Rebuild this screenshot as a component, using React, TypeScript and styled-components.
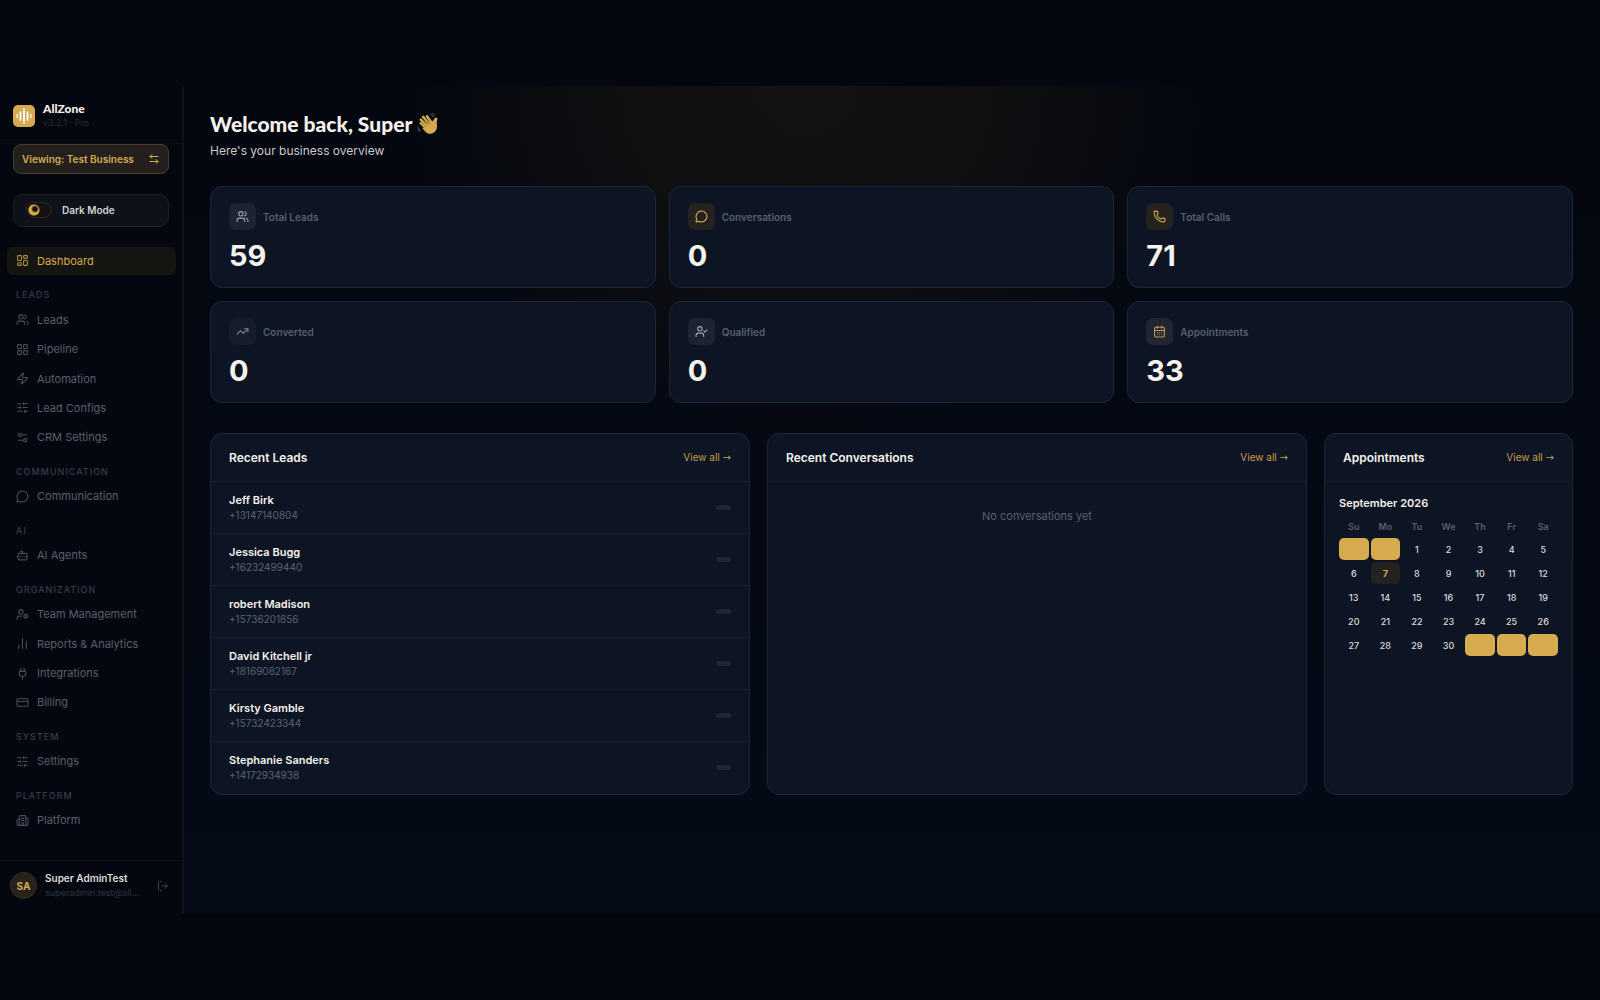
import React from "react";
import styled, { createGlobalStyle, css } from "styled-components";
import {
  ArrowLeftRight,
  Bot,
  Building2,
  CalendarDays,
  ChartNoAxesColumn,
  CreditCard,
  LayoutDashboard,
  LayoutGrid,
  LogOut,
  MessageCircle,
  Phone,
  Plug,
  Settings2,
  SlidersHorizontal,
  TrendingUp,
  UserCheck,
  UserCog,
  Users,
  Zap,
} from "lucide-react";

const gold = "#d6ab4f";
const cream = "#f5f2ec";
const muted = "#56606b";
const panel = "#0d1423";
const line = "#1e2636";

const GlobalStyle = createGlobalStyle`
  * { box-sizing: border-box; }
  body {
    margin: 0;
    background: #04070f;
    color: ${cream};
    font-family: Inter, "Liberation Sans", sans-serif;
    -webkit-font-smoothing: antialiased;
  }
  button { font: inherit; color: inherit; border: 0; background: none; padding: 0; cursor: pointer; }
  a { color: inherit; text-decoration: none; }
  h1, h2, h3, p, ul { margin: 0; padding: 0; }
  ul { list-style: none; }
`;

const Page = styled.div`
  min-height: 100vh;
  padding: 86px 0 87px;
  display: flex;
`;

const Sidebar = styled.aside`
  width: 184px;
  flex: none;
  display: flex;
  flex-direction: column;
  border-right: 2px solid #101216;
`;

const Brand = styled.div`
  display: flex;
  align-items: center;
  gap: 8px;
  height: 58px;
  padding: 2px 13px 0;
  border-bottom: 1px solid #0b0e14;
`;

const BrandName = styled.div`
  font: 900 12px/14px Lato, sans-serif;
`;

const Version = styled.div`
  font-size: 9px;
  line-height: 14px;
  color: #262e3e;
`;

const Viewing = styled.button`
  height: 30px;
  margin: 0 13px;
  padding: 0 8px;
  display: flex;
  align-items: center;
  justify-content: space-between;
  border: 1px solid #4a3f28;
  border-radius: 8px;
  background: #231f1c;
  color: ${gold};
  font-size: 10px;
  font-weight: 600;
`;

const ModeSwitch = styled.label`
  height: 33px;
  margin: 20px 13px 19px;
  padding: 0 12px 2px;
  display: flex;
  align-items: center;
  gap: 10px;
  border: 1px solid #20201f;
  border-radius: 10px;
  background: #0e1118;
  color: #d3d3d3;
  font-size: 10px;
  font-weight: 600;
  cursor: pointer;
`;

const ModeInput = styled.input`
  appearance: none;
  width: 26px;
  height: 16px;
  margin: 0;
  border: 1px solid #2c2820;
  border-radius: 8px;
  background:
    radial-gradient(circle at 8px 6px, #15130f 2px, transparent 4px),
    radial-gradient(circle at 7px 7px, ${gold} 5px, transparent 6px),
    #15130f;
`;

const Nav = styled.nav`
  flex: 1;
  padding: 0 6px 25px 7px;
  display: grid;
  grid-auto-rows: 1fr;
  align-items: center;
`;

const NavLink = styled.a<{ $active?: boolean }>`
  height: 28px;
  padding: 0 9px;
  display: flex;
  align-items: center;
  gap: 8px;
  border-radius: 6px;
  font-size: 11px;
  color: #56616d;
  ${(p) =>
    p.$active &&
    css`
      background: #141411;
      color: ${gold};
    `}
  svg { flex: none; opacity: 0.8; }
`;

const NavLabel = styled.h3`
  padding: 10px 9px 0;
  font-size: 9px;
  line-height: 12px;
  font-weight: 500;
  letter-spacing: 1px;
  color: #353d4b;
`;

const Account = styled.div`
  height: 53px;
  padding: 0 13px 3px 10px;
  display: flex;
  align-items: center;
  gap: 8px;
  border-top: 1px solid #0b0f16;
`;

const Avatar = styled.div`
  width: 27px;
  height: 27px;
  flex: none;
  display: grid;
  place-items: center;
  border: 1px solid #39301f;
  border-radius: 50%;
  background: #25221e;
  color: ${gold};
  font-size: 10px;
  font-weight: 700;
`;

const AccountText = styled.div`
  flex: 1;
  min-width: 0;
`;

const AccountName = styled.div`
  font-size: 10px;
  line-height: 15px;
  font-weight: 600;
  color: #dedddb;
  white-space: nowrap;
`;

const AccountMail = styled.div`
  font-size: 9px;
  line-height: 14px;
  color: #2b3444;
  white-space: nowrap;
`;

const LogoutButton = styled.button`
  display: flex;
  margin-left: 4px;
  color: #3b4350;
`;

const Main = styled.main`
  flex: 1;
  min-width: 0;
  padding: 24px 27px 0 26px;
  background:
    radial-gradient(ellipse 400px 360px at 44% 0, rgba(25, 23, 19, 0.7) 0, rgba(25, 23, 19, 0.55) 45%, transparent 100%),
    linear-gradient(#04070f 0, #040914 60%, #040b16 100%);
`;

const Title = styled.h1`
  display: flex;
  align-items: center;
  gap: 5px;
  font: 900 21px/28px Lato, sans-serif;
`;

const Subtitle = styled.p`
  margin-top: 4px;
  font-size: 12px;
  line-height: 18px;
  color: #c9c9ca;
`;

const StatGrid = styled.section`
  margin-top: 26px;
  display: grid;
  grid-template-columns: repeat(3, 1fr);
  gap: 13px;
`;

const Card = styled.article`
  border: 1px solid ${line};
  border-radius: 12px;
  background: ${panel};
`;

const StatCard = styled(Card)`
  padding: 16px 18px 15px;
`;

const StatHead = styled.div`
  display: flex;
  align-items: center;
  gap: 7px;
  color: ${muted};
  font-size: 10px;
  line-height: 14px;
  font-weight: 600;
`;

const tones = {
  grey: ["#1c2333", "#a3a4a6"],
  gold: ["#25221f", gold],
  dim: ["#151c2a", "#84868a"],
  mixed: ["#212531", "#c09a55"],
};

const StatIcon = styled.span<{ $tone: keyof typeof tones }>`
  width: 27px;
  height: 27px;
  display: grid;
  place-items: center;
  border-radius: 7px;
  background: ${(p) => tones[p.$tone][0]};
  color: ${(p) => tones[p.$tone][1]};
`;

const StatValue = styled.div`
  margin-top: 10px;
  font-size: 29px;
  line-height: 32px;
  font-weight: 700;
`;

const PanelGrid = styled.section`
  margin-top: 30px;
  display: grid;
  grid-template-columns: 1fr 1fr 249px;
  gap: 17px;
`;

const PanelHead = styled.header`
  height: 48px;
  padding: 0 18px;
  display: flex;
  align-items: center;
  justify-content: space-between;
  border-bottom: 1px solid #161e2c;
`;

const PanelTitle = styled.h2`
  font-size: 12px;
  line-height: 16px;
  font-weight: 600;
`;

const ViewAll = styled.a`
  padding-bottom: 1px;
  font-size: 10px;
  line-height: 14px;
  color: #c59e4b;
`;

const Arrow = styled.span`
  font-family: "DejaVu Sans", sans-serif;
`;

const LeadRow = styled.li`
  height: 52px;
  padding: 0 18px 1px;
  display: flex;
  align-items: center;
  justify-content: space-between;
  border-bottom: 1px solid #161e2c;
  &:last-child { border-bottom-color: transparent; }
`;

const LeadName = styled.div`
  font-size: 11px;
  line-height: 16px;
  font-weight: 600;
`;

const LeadPhone = styled.div`
  font-size: 10px;
  line-height: 15px;
  color: #5b6470;
`;

const StatusPill = styled.span`
  width: 15px;
  height: 5px;
  border-radius: 3px;
  background: #1f2533;
`;

const Empty = styled.p`
  padding-top: 26px;
  text-align: center;
  font-size: 11px;
  line-height: 16px;
  color: #59626d;
`;

const Calendar = styled.div`
  padding: 13px 14px;
`;

const Month = styled.h3`
  font-size: 11px;
  line-height: 16px;
  font-weight: 600;
`;

const CalendarGrid = styled.div`
  margin-top: 10px;
  display: grid;
  grid-template-columns: repeat(7, 1fr);
  gap: 2px;
`;

const Weekday = styled.span`
  height: 15px;
  text-align: center;
  font-size: 9px;
  line-height: 12px;
  font-weight: 600;
  color: ${muted};
`;

const Day = styled.button<{ $today?: boolean }>`
  height: 22px;
  border-radius: 5px;
  font-size: 9px;
  font-weight: 500;
  color: #dddcd9;
  ${(p) =>
    p.$today &&
    css`
      background: #23221f;
      color: ${gold};
      font-weight: 700;
    `}
`;

const OutsideDay = styled.span`
  height: 22px;
  border-radius: 5px;
  background: ${gold};
`;

const Logo = () => (
  <svg width="22" height="22" viewBox="0 0 22 22">
    <rect width="22" height="22" rx="5" fill={gold} />
    <g stroke="#fff" strokeWidth="1.7" strokeLinecap="round">
      <path d="M11 4v14M7.5 7v8M14.5 7v8" />
      <path d="M4.2 9.5v3M17.8 9.5v3" opacity=".7" />
    </g>
  </svg>
);

const Wave = () => (
  <svg width="22" height="22" viewBox="0 0 22 22" fill="none" strokeLinecap="round">
    <path d="M8.500 12.500 15 9l3.200-4.200c1.200-.9 2.500.2 2.200 1.400l-.8 3.600c.9 3.600.7 6.900-1.900 9.200-3.200 2.600-6.900 2.200-9.200-.3l-3-3.300Z" fill={gold} />
    <path d="m10 16-6.300-5.800M11 13.500 3.800 6.700M13 12 6.200 3.900M15 10.500 10 3.200" stroke={gold} strokeWidth="2.500" />
    <path d="m9 14.300-4.400-4.200M10.500 12.200 6 7.500M12.600 10.800 8.700 6" stroke="#6d5526" strokeWidth=".5" />
    <path d="M13.500 1.200q2 .6 2.600 2.700M15.300.4q1.700.8 2 2.400M.8 13.800q.4 2.500 2.600 3.600M.5 16.400q.6 1.600 2 2.200" stroke="#59616b" strokeWidth=".9" />
  </svg>
);

type Icon = React.ComponentType<{ size?: number; strokeWidth?: number }>;

const groups: { label?: string; items: [string, Icon][] }[] = [
  { items: [["Dashboard", LayoutDashboard]] },
  {
    label: "LEADS",
    items: [
      ["Leads", Users],
      ["Pipeline", LayoutGrid],
      ["Automation", Zap],
      ["Lead Configs", SlidersHorizontal],
      ["CRM Settings", Settings2],
    ],
  },
  { label: "COMMUNICATION", items: [["Communication", MessageCircle]] },
  { label: "AI", items: [["AI Agents", Bot]] },
  {
    label: "ORGANIZATION",
    items: [
      ["Team Management", UserCog],
      ["Reports & Analytics", ChartNoAxesColumn],
      ["Integrations", Plug],
      ["Billing", CreditCard],
    ],
  },
  { label: "SYSTEM", items: [["Settings", SlidersHorizontal]] },
  { label: "PLATFORM", items: [["Platform", Building2]] },
];

const stats: [string, number, Icon, keyof typeof tones][] = [
  ["Total Leads", 59, Users, "grey"],
  ["Conversations", 0, MessageCircle, "gold"],
  ["Total Calls", 71, Phone, "gold"],
  ["Converted", 0, TrendingUp, "dim"],
  ["Qualified", 0, UserCheck, "grey"],
  ["Appointments", 33, CalendarDays, "mixed"],
];

const leads = [
  ["Jeff Birk", "+13147140804"],
  ["Jessica Bugg", "+16232499440"],
  ["robert Madison", "+15736201856"],
  ["David Kitchell jr", "+18169082167"],
  ["Kirsty Gamble", "+15732423344"],
  ["Stephanie Sanders", "+14172934938"],
];

const weekdays = ["Su", "Mo", "Tu", "We", "Th", "Fr", "Sa"];
const days = Array.from({ length: 35 }, (_, i) => i - 1);

const Header = ({ title }: { title: string }) => (
  <PanelHead>
    <PanelTitle>{title}</PanelTitle>
    <ViewAll href="#">
      View all <Arrow>→</Arrow>
    </ViewAll>
  </PanelHead>
);

export default function App() {
  return (
    <>
      <GlobalStyle />
      <Page>
        <Sidebar>
          <Brand>
            <Logo />
            <div>
              <BrandName>AllZone</BrandName>
              <Version>v3.2.1 · Pro</Version>
            </div>
          </Brand>
          <Viewing>
            Viewing: Test Business
            <ArrowLeftRight size={12} strokeWidth={2} />
          </Viewing>
          <ModeSwitch>
            <ModeInput type="checkbox" defaultChecked />
            Dark Mode
          </ModeSwitch>
          <Nav>
            {groups.map((group, i) => (
              <React.Fragment key={i}>
                {group.label && <NavLabel>{group.label}</NavLabel>}
                {group.items.map(([name, Glyph]) => (
                  <NavLink key={name} href="#" $active={name === "Dashboard"}>
                    <Glyph size={13} strokeWidth={2} />
                    {name}
                  </NavLink>
                ))}
              </React.Fragment>
            ))}
          </Nav>
          <Account>
            <Avatar>SA</Avatar>
            <AccountText>
              <AccountName>Super AdminTest</AccountName>
              <AccountMail>superadmin.test@all...</AccountMail>
            </AccountText>
            <LogoutButton aria-label="Log out">
              <LogOut size={12} />
            </LogoutButton>
          </Account>
        </Sidebar>
        <Main>
          <Title>
            Welcome back, Super <Wave />
          </Title>
          <Subtitle>Here's your business overview</Subtitle>
          <StatGrid>
            {stats.map(([label, value, Glyph, tone]) => (
              <StatCard key={label}>
                <StatHead>
                  <StatIcon $tone={tone}>
                    <Glyph size={13} strokeWidth={2} />
                  </StatIcon>
                  {label}
                </StatHead>
                <StatValue>{value}</StatValue>
              </StatCard>
            ))}
          </StatGrid>
          <PanelGrid>
            <Card>
              <Header title="Recent Leads" />
              <ul>
                {leads.map(([name, phone]) => (
                  <LeadRow key={phone}>
                    <div>
                      <LeadName>{name}</LeadName>
                      <LeadPhone>{phone}</LeadPhone>
                    </div>
                    <StatusPill />
                  </LeadRow>
                ))}
              </ul>
            </Card>
            <Card>
              <Header title="Recent Conversations" />
              <Empty>No conversations yet</Empty>
            </Card>
            <Card>
              <Header title="Appointments" />
              <Calendar>
                <Month>September 2026</Month>
                <CalendarGrid>
                  {weekdays.map((d) => (
                    <Weekday key={d}>{d}</Weekday>
                  ))}
                  {days.map((d) =>
                    d < 1 || d > 30 ? (
                      <OutsideDay key={d} />
                    ) : (
                      <Day key={d} $today={d === 7}>
                        {d}
                      </Day>
                    )
                  )}
                </CalendarGrid>
              </Calendar>
            </Card>
          </PanelGrid>
        </Main>
      </Page>
    </>
  );
}
